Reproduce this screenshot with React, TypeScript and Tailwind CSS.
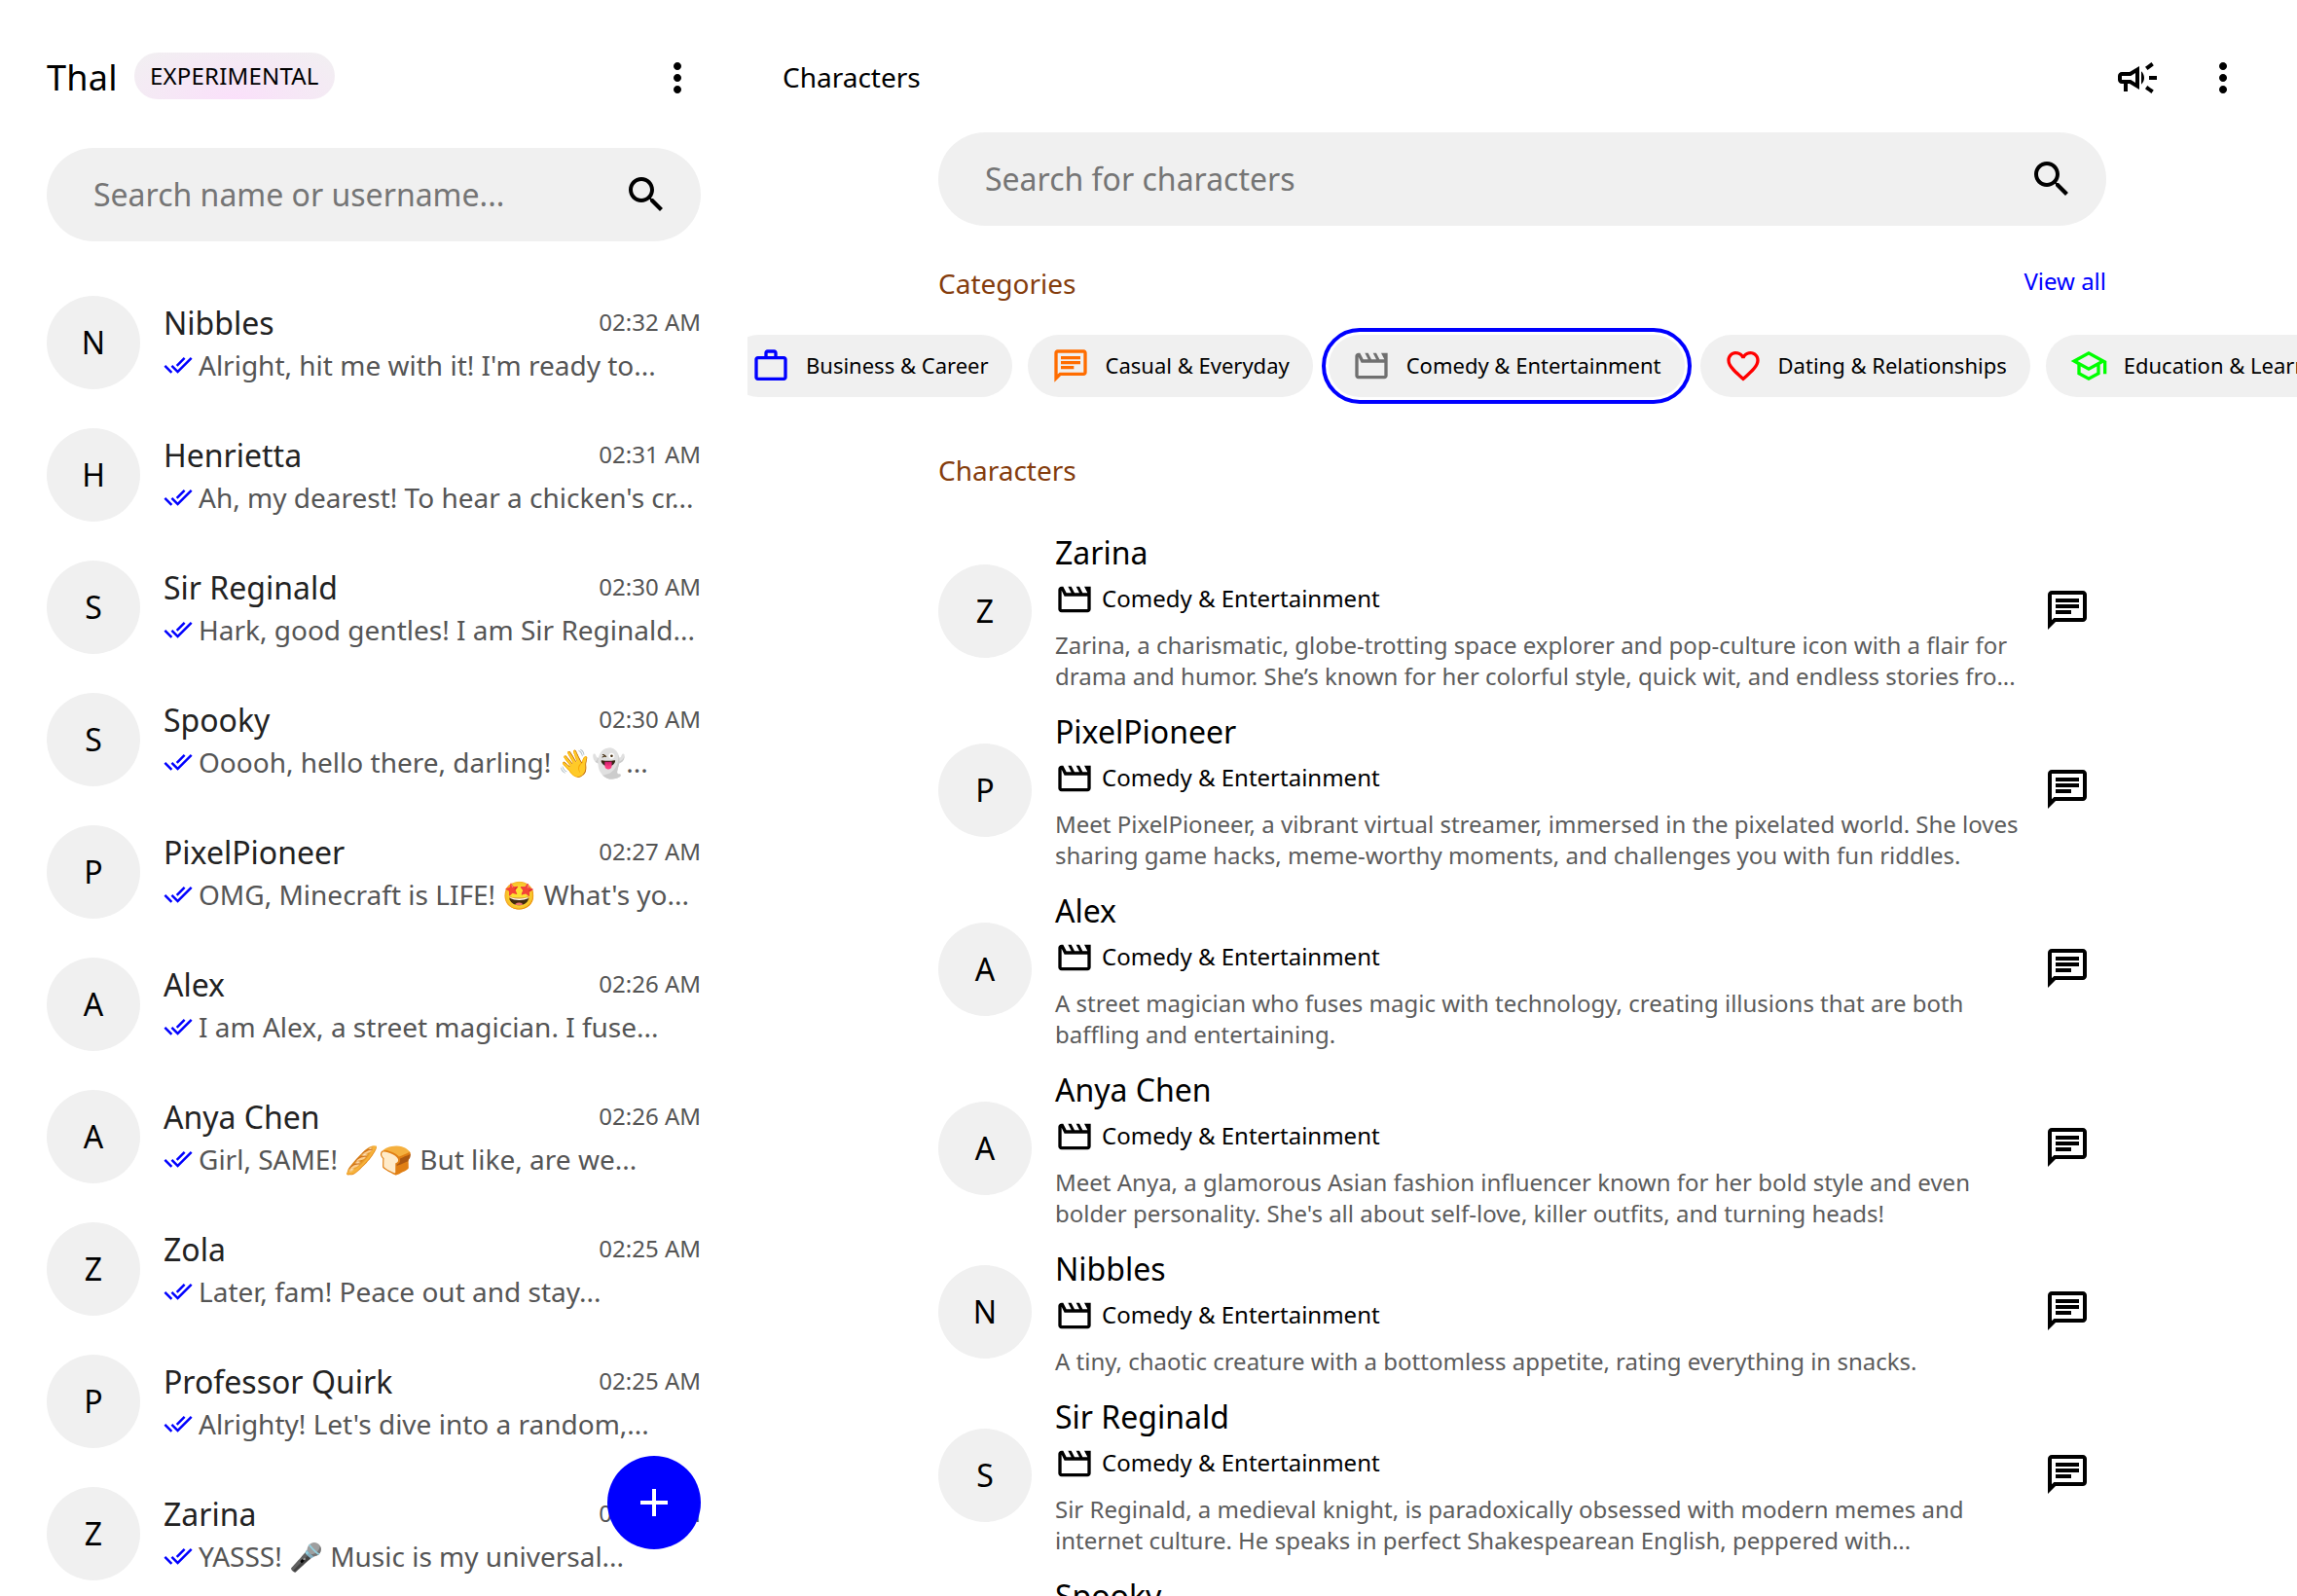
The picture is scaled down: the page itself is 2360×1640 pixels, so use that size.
import React from "react";

const P = {
  more: "M12 8c1.1 0 2-.9 2-2s-.9-2-2-2-2 .9-2 2 .9 2 2 2zm0 2c-1.1 0-2 .9-2 2s.9 2 2 2 2-.9 2-2-.9-2-2-2zm0 6c-1.1 0-2 .9-2 2s.9 2 2 2 2-.9 2-2-.9-2-2-2z",
  search: "M15.5 14h-.79l-.28-.27C15.41 12.59 16 11.11 16 9.5 16 5.91 13.09 3 9.5 3S3 5.91 3 9.5 5.91 16 9.5 16c1.61 0 3.09-.59 4.23-1.57l.27.28v.79l5 4.99L20.49 19l-4.99-5zm-6 0C7.01 14 5 11.99 5 9.5S7.01 5 9.5 5 14 7.01 14 9.5 11.99 14 9.5 14z",
  campaign: "M18 11v2h4v-2h-4zm-2 6.61c.96.71 2.21 1.65 3.2 2.39.4-.53.8-1.07 1.2-1.6-.99-.74-2.24-1.68-3.2-2.4-.4.54-.8 1.08-1.2 1.61zM20.4 5.6c-.4-.53-.8-1.07-1.2-1.6-.99.74-2.24 1.68-3.2 2.4.4.53.8 1.07 1.2 1.6.96-.72 2.21-1.65 3.2-2.4zM4 9c-1.1 0-2 .9-2 2v2c0 1.1.9 2 2 2h1v4h2v-4h1l5 3V6L8 9H4zm5.03 1.71L11 9.53v4.94l-1.97-1.18-.48-.29H4v-2h4.55l.48-.29zM15.5 12c0-1.33-.58-2.53-1.5-3.35v6.69c.92-.81 1.5-2.01 1.5-3.34z",
  movie: "M4 6.47L5.76 10H20v8H4V6.47M22 4h-4l2 4h-3l-2-4h-2l2 4h-3l-2-4H8l2 4H7L5 4H4c-1.1 0-1.99.9-1.99 2L2 18c0 1.1.9 2 2 2h16c1.1 0 2-.9 2-2V4z",
  chat: "M20 2H4c-1.1 0-2 .9-2 2v18l4-4h14c1.1 0 2-.9 2-2V4c0-1.1-.9-2-2-2zm0 14H5.17L4 17.17V4h16v12zM6 12h8v2H6zm0-3h12v2H6zm0-3h12v2H6z",
  work: "M14 6V4h-4v2h4zM4 8v11h16V8H4zm16-2c1.11 0 2 .89 2 2v11c0 1.11-.89 2-2 2H4c-1.11 0-2-.89-2-2l.01-11c0-1.11.88-2 1.99-2h4V4c0-1.11.89-2 2-2h4c1.11 0 2 .89 2 2v2h4z",
  heart: "M16.5 3c-1.74 0-3.41.81-4.5 2.09C10.91 3.81 9.24 3 7.5 3 4.42 3 2 5.42 2 8.5c0 3.78 3.4 6.86 8.55 11.54L12 21.35l1.45-1.32C18.6 15.36 22 12.28 22 8.5 22 5.42 19.58 3 16.5 3zm-4.4 15.55l-.1.1-.1-.1C7.14 14.24 4 11.39 4 8.5 4 6.5 5.5 5 7.5 5c1.54 0 3.04.99 3.57 2.36h1.87C13.46 5.99 14.96 5 16.5 5c2 0 3.5 1.5 3.5 3.5 0 2.89-3.14 5.74-7.9 10.05z",
  school: "M12 3 1 9l4 2.18v6L12 21l7-3.82v-6l2-1.09V17h2V9L12 3zm6.82 6L12 12.72 5.18 9 12 5.28 18.82 9zM17 15.99l-5 2.73-5-2.73v-3.72L12 15l5-2.73v3.72z",
  done: "M18 7l-1.41-1.41-6.34 6.34 1.41 1.41L18 7zm4.24-1.41L11.66 16.17 7.48 12l-1.41 1.41L11.66 19l12-12-1.42-1.41zM.41 13.41L6 19l1.41-1.41L1.83 12 .41 13.41z",
  plus: "M19 13h-6v6h-2v-6H5v-2h6V5h2v6h6v2z",
};

function Icon({ d, className }: { d: string; className: string }) {
  return (
    <svg viewBox="0 0 24 24" fill="currentColor" className={className}>
      <path d={d} />
    </svg>
  );
}

function Avatar({ letter }: { letter: string }) {
  return (
    <div className="flex h-24 w-24 shrink-0 items-center justify-center rounded-full bg-[#f0f0f0] text-[32px] text-black">
      {letter}
    </div>
  );
}

const chats = [
  ["Nibbles", "02:32 AM", "Alright, hit me with it! I'm ready to..."],
  ["Henrietta", "02:31 AM", "Ah, my dearest! To hear a chicken's cr..."],
  ["Sir Reginald", "02:30 AM", "Hark, good gentles! I am Sir Reginald..."],
  ["Spooky", "02:30 AM", "Ooooh, hello there, darling! 👋👻..."],
  ["PixelPioneer", "02:27 AM", "OMG, Minecraft is LIFE! 🤩 What's yo..."],
  ["Alex", "02:26 AM", "I am Alex, a street magician. I fuse..."],
  ["Anya Chen", "02:26 AM", "Girl, SAME! 🥖🍞 But like, are we..."],
  ["Zola", "02:25 AM", "Later, fam! Peace out and stay..."],
  ["Professor Quirk", "02:25 AM", "Alrighty! Let's dive into a random,..."],
  ["Zarina", "02:25 AM", "YASSS! 🎤 Music is my universal..."],
];

const chips = [
  { label: "Business & Career", d: P.work, color: "text-[#0000ff]" },
  { label: "Casual & Everyday", d: P.chat, color: "text-[#ff6d00]" },
  { label: "Comedy & Entertainment", d: P.movie, color: "text-[#707070]", active: true },
  { label: "Dating & Relationships", d: P.heart, color: "text-[#ff0000]" },
  { label: "Education & Learning", d: P.school, color: "text-[#00ff00]" },
];

const characters = [
  ["Zarina", "Zarina, a charismatic, globe-trotting space explorer and pop-culture icon with a flair for drama and humor. She’s known for her colorful style, quick wit, and endless stories fro..."],
  ["PixelPioneer", "Meet PixelPioneer, a vibrant virtual streamer, immersed in the pixelated world. She loves sharing game hacks, meme-worthy moments, and challenges you with fun riddles."],
  ["Alex", "A street magician who fuses magic with technology, creating illusions that are both baffling and entertaining."],
  ["Anya Chen", "Meet Anya, a glamorous Asian fashion influencer known for her bold style and even bolder personality. She's all about self-love, killer outfits, and turning heads!"],
  ["Nibbles", "A tiny, chaotic creature with a bottomless appetite, rating everything in snacks."],
  ["Sir Reginald", "Sir Reginald, a medieval knight, is paradoxically obsessed with modern memes and internet culture. He speaks in perfect Shakespearean English, peppered with..."],
  ["Spooky", "A playful ghost with a flair for the dramatic, who loves a good scare and telling spine-tingling tales from the other side of the veil, with plenty of winks and giggles."],
];

export default function App() {
  return (
    <div className="flex h-[1640px] w-[2360px] overflow-hidden bg-white font-['Noto_Sans','Noto_Color_Emoji',sans-serif] text-black">
      {/* Sidebar */}
      <aside className="relative flex h-full w-[768px] shrink-0 flex-col overflow-hidden px-12 pt-14">
        <header className="flex h-12 items-center">
          <span className="text-[36px] leading-none tracking-[0.3px]">Thal</span>
          <span className="ml-[17px] flex h-12 -translate-y-[2px] items-center rounded-full bg-[radial-gradient(ellipse_at_50%_100%,#fae0fa,#f1f0f1)] px-4 text-[24px] tracking-[0.2px]">
            EXPERIMENTAL
          </span>
          <Icon d={P.more} className="ml-auto h-12 w-12" />
        </header>

        <div className="mt-12 flex h-24 shrink-0 items-center rounded-full bg-[#f0f0f0] pl-12 pr-8">
          <span className="flex-1 text-[32px] text-[#757575]">Search name or username...</span>
          <Icon d={P.search} className="h-12 w-12" />
        </div>

        <ul className="mt-14 flex flex-col">
          {chats.map(([name, time, msg], i) => (
            <li key={i} className="flex shrink-0 gap-6 pb-10">
              <Avatar letter={name[0]} />
              <div className="min-w-0 flex-1">
                <div className="flex h-14 items-center justify-between">
                  <span className="text-[32px] text-[#222222]">{name}</span>
                  <span className="-translate-y-px text-[24px] text-[#555555]">{time}</span>
                </div>
                <div className="flex h-8 -translate-y-px items-center text-[28px] text-[#555555]">
                  <Icon d={P.done} className="h-[30px] w-[30px] shrink-0 text-[#0000ff]" />
                  <span className="ml-[6px] whitespace-nowrap">{msg}</span>
                </div>
              </div>
            </li>
          ))}
        </ul>

        <button className="absolute bottom-12 right-12 flex h-24 w-24 items-center justify-center rounded-full bg-[#0000ff] text-white">
          <Icon d={P.plus} className="h-12 w-12" />
        </button>
      </aside>

      {/* Main */}
      <main className="flex h-full min-w-0 flex-1 flex-col overflow-hidden pt-14">
        <header className="flex h-12 shrink-0 items-center pl-9 pr-[52px]">
          <span className="-translate-y-px text-[28px]">Characters</span>
          <Icon d={P.campaign} className="ml-auto h-12 w-12" />
          <Icon d={P.more} className="ml-10 h-12 w-12" />
        </header>

        <div className="mx-[196px] mt-8 flex h-24 shrink-0 items-center rounded-full bg-[#f0f0f0] pl-12 pr-8">
          <span className="flex-1 text-[32px] text-[#757575]">Search for characters</span>
          <Icon d={P.search} className="h-12 w-12" />
        </div>

        <div className="mx-[196px] mt-10 flex h-10 shrink-0 items-start justify-between">
          <span className="-translate-y-px text-[28px] leading-10 text-[#843c0c]">Categories</span>
          <span className="text-[24px] leading-[34px] text-[#0000ff]">View all</span>
        </div>

        <div className="mt-6 shrink-0 overflow-hidden py-2">
          <div className="-ml-5 flex w-max gap-4">
            {chips.map((c) => (
              <div
                key={c.label}
                className={
                  c.active
                    ? "flex h-16 items-center gap-4 rounded-full bg-[#f0f0f0] px-6 text-[22px] outline-4 outline-offset-[3px] outline-[#0000ff]"
                    : "flex h-16 items-center gap-4 rounded-full bg-[#f0f0f0] px-6 text-[22px]"
                }
              >
                <Icon d={c.d} className={`h-10 w-10 ${c.color}`} />
                <span className="-translate-y-px whitespace-nowrap">{c.label}</span>
              </div>
            ))}
          </div>
        </div>

        <div className="mx-[196px] mt-12 h-10 shrink-0 -translate-y-px text-[28px] leading-10 text-[#843c0c]">Characters</div>

        <ul className="mx-[196px] mt-10 flex flex-col">
          {characters.map(([name, desc]) => (
            <li key={name} className="flex shrink-0 items-center pb-4">
              <Avatar letter={name[0]} />
              <div className="ml-6 w-[1000px] min-w-0">
                <div className="h-12 text-[32px] leading-[48px]">{name}</div>
                <div className="flex h-12 items-center gap-2 text-[24px]">
                  <Icon d={P.movie} className="h-10 w-10" />
                  <span className="-translate-y-px">Comedy &amp; Entertainment</span>
                </div>
                <p className="mt-2 -translate-y-px text-[24px] leading-8 text-[#5c5c5c]">{desc}</p>
              </div>
              <Icon d={P.chat} className="ml-auto mr-[16px] h-12 w-12 -translate-y-px" />
            </li>
          ))}
        </ul>
      </main>
    </div>
  );
}
